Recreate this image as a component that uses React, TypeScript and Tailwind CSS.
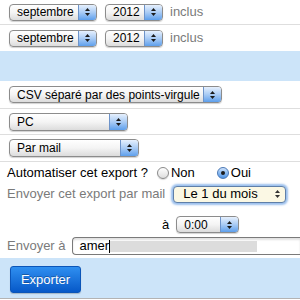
import React from "react"

function Arrows({ dark = false }: { dark?: boolean }) {
  const c = dark ? "#333" : "#1a1a1a"
  return (
    <span className="flex flex-col items-center justify-center gap-[2px]">
      <svg width="5" height="3" viewBox="0 0 5 3">
        <path d="M2.5 0L5 3H0z" fill={c} />
      </svg>
      <svg width="5" height="3" viewBox="0 0 5 3">
        <path d="M0 0h5L2.5 3z" fill={c} />
      </svg>
    </span>
  )
}

function Select({ label, className }: { label: string; className: string }) {
  return (
    <div
      className={`flex shrink-0 overflow-hidden rounded-[4px] border border-[#8c8c8c] bg-gradient-to-b from-white via-[#f4f4f4] to-[#dcdcdc] shadow-[0_1px_1px_rgba(0,0,0,0.18)] ${className}`}
    >
      <span className="flex flex-1 items-center pl-[7px] text-[12px] text-black whitespace-nowrap">{label}</span>
      <span className="flex w-[18px] items-center justify-center border-l border-[#6d93c9] bg-gradient-to-b from-[#e6f0fd] via-[#a9cbf4] to-[#5d9fec]">
        <Arrows />
      </span>
    </div>
  )
}

function Radio({ on = false }: { on?: boolean }) {
  if (on) {
    return (
      <span className="flex h-[12px] w-[12px] items-center justify-center rounded-full border border-[#4a78b5] bg-gradient-to-b from-[#cfe2fb] via-[#8cbcf2] to-[#4f94e6]">
        <span className="h-[4px] w-[4px] rounded-full bg-[#1b1b1b]" />
      </span>
    )
  }
  return <span className="block h-[12px] w-[12px] rounded-full border border-[#8a8a8a] bg-gradient-to-b from-white to-[#dedede] shadow-[0_1px_1px_rgba(0,0,0,0.15)]" />
}

export default function App() {
  return (
    <div className="h-[300px] w-[300px] overflow-hidden bg-white font-['Liberation_Sans',Arial,sans-serif] text-[13px] text-black">
      <div className="flex h-[25px] items-center border-b border-[#dedede] pl-[9px]">
        <Select label="septembre" className="h-[17px] w-[88px]" />
        <Select label="2012" className="ml-[8px] h-[17px] w-[58px]" />
        <span className="ml-[7px] text-[#7a7a7a]">inclus</span>
      </div>
      <div className="flex h-[26px] items-center pl-[9px]">
        <Select label="septembre" className="h-[17px] w-[88px]" />
        <Select label="2012" className="ml-[8px] h-[17px] w-[58px]" />
        <span className="ml-[7px] text-[#7a7a7a]">inclus</span>
      </div>
      <div className="h-[30px] bg-[#cce4f9]" />

      <div className="flex h-[28px] items-center border-b border-[#dedede] pl-[9px]">
        <Select label="CSV séparé par des points-virgule" className="h-[17px] w-[213px]" />
      </div>
      <div className="flex h-[26px] items-center border-b border-[#dedede] pl-[9px]">
        <Select label="PC" className="h-[18px] w-[119px]" />
      </div>
      <div className="flex h-[27px] items-center border-b border-[#dedede] pl-[9px]">
        <Select label="Par mail" className="h-[18px] w-[130px]" />
      </div>

      <div className="flex h-[22px] items-center pl-[7px]">
        <span>Automatiser cet export ?</span>
        <span className="ml-[9px] flex"><Radio /></span>
        <span className="ml-[2px]">Non</span>
        <span className="ml-[22px] flex"><Radio on /></span>
        <span className="ml-[2px]">Oui</span>
      </div>
      <div className="flex h-[20px] items-center pl-[7px]">
        <span className="text-[#7a7a7a]">Envoyer cet export par mail</span>
        <div className="ml-[8px] flex h-[17px] w-[113px] items-center rounded-[4px] border border-[#5f7fa8] bg-[#fbf8e4] shadow-[0_0_2px_2px_rgba(90,150,225,0.6)]">
          <span className="flex-1 pl-[9px] text-[13px]">Le 1 du mois</span>
          <span className="flex w-[16px] justify-center">
            <Arrows dark />
          </span>
        </div>
      </div>
      <div className="flex h-[33px] items-start pl-[162px] pt-[12px]">
        <span className="leading-[17px]">à</span>
        <Select label="0:00" className="ml-[7px] h-[17px] w-[63px]" />
      </div>
      <div className="flex h-[21px] items-start pl-[7px]">
        <span className="leading-[18px] text-[#7a7a7a]">Envoyer à</span>
        <div className="ml-[6px] flex h-[18px] flex-1 items-center rounded-l-[4px] border border-r-0 border-[#7a7a7a] bg-white pl-[7px] shadow-[inset_0_2px_2px_rgba(0,0,0,0.12)]">
          <span>amer</span>
          <span className="h-[13px] w-[1px] bg-black" />
          <span className="h-[11px] w-[147px] bg-[#dcdcdc]" />
        </div>
      </div>

      <div className="h-[41px] border-b border-[#b3b3b3] bg-[#cce4f9] pl-[10px] pt-[8px]">
        <button className="h-[27px] w-[71px] rounded-[3px] border border-[#0b55b8] bg-gradient-to-b from-[#2f8ff0] to-[#0658c8] text-[13px] text-white shadow-[0_1px_1px_rgba(0,0,0,0.2)] [text-shadow:0_-1px_0_rgba(0,0,0,0.3)]">
          Exporter
        </button>
      </div>
    </div>
  )
}
